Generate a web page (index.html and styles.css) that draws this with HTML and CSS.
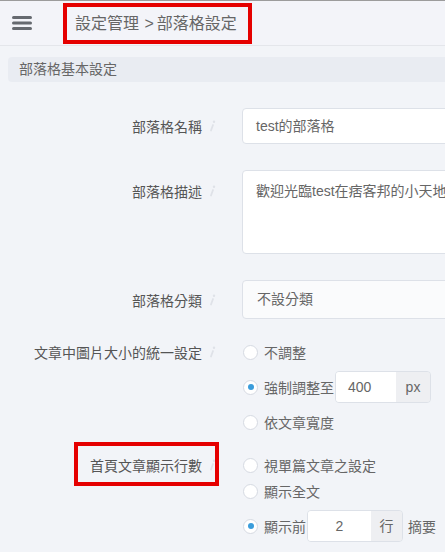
FILE: index.html
```html
<!DOCTYPE html>
<html lang="zh-Hant">
<head>
  <meta charset="UTF-8" />
  <meta name="viewport" content="width=device-width, initial-scale=1.0" />
  <title>部落格設定</title>
  <link rel="stylesheet" href="styles.css">
</head>
<body>

  <header class="topbar">
    <svg class="menu-icon" width="20" height="16" viewBox="0 0 20 16">
      <rect x="0" y="1" width="20" height="3" rx="1.5" fill="#666a70" />
      <rect x="0" y="6.5" width="20" height="3" rx="1.5" fill="#666a70" />
      <rect x="0" y="12" width="20" height="3" rx="1.5" fill="#666a70" />
    </svg>
    <div class="crumbs">設定管理 <span class="crumb-sep">&gt;</span>部落格設定</div>
  </header>

  <div class="section-title">部落格基本設定</div>

  <div class="form">

    <!-- 部落格名稱 -->
    <div class="row row-input">
      <div class="label">部落格名稱 <svg class="info" width="8" height="12" viewBox="0 0 8 12"><circle cx="6" cy="1.8" r="1.2" fill="#dfe2e8"/><path d="M5 5 L3 10.5" stroke="#dfe2e8" stroke-width="1.8" stroke-linecap="round"/></svg></div>
      <div class="field"><div class="text-input">test的部落格</div></div>
    </div>

    <!-- 部落格描述 -->
    <div class="row row-tall">
      <div class="label">部落格描述 <svg class="info" width="8" height="12" viewBox="0 0 8 12"><circle cx="6" cy="1.8" r="1.2" fill="#dfe2e8"/><path d="M5 5 L3 10.5" stroke="#dfe2e8" stroke-width="1.8" stroke-linecap="round"/></svg></div>
      <div class="field"><div class="textarea">歡迎光臨test在痞客邦的小天地</div></div>
    </div>

    <!-- 部落格分類 -->
    <div class="row row-select">
      <div class="label">部落格分類 <svg class="info" width="8" height="12" viewBox="0 0 8 12"><circle cx="6" cy="1.8" r="1.2" fill="#dfe2e8"/><path d="M5 5 L3 10.5" stroke="#dfe2e8" stroke-width="1.8" stroke-linecap="round"/></svg></div>
      <div class="field"><div class="select">不設分類</div></div>
    </div>

    <!-- 圖片大小 -->
    <div class="row row-radio row-img">
      <div class="label">文章中圖片大小的統一設定 <svg class="info" width="8" height="12" viewBox="0 0 8 12"><circle cx="6" cy="1.8" r="1.2" fill="#dfe2e8"/><path d="M5 5 L3 10.5" stroke="#dfe2e8" stroke-width="1.8" stroke-linecap="round"/></svg></div>
      <div class="field">
        <div class="opt"><span class="radio"></span>不調整</div>
        <div class="opt opt-group"><span class="radio checked"></span>強制調整至<span class="input-group"><span class="ig-value">400</span><span class="ig-addon">px</span></span></div>
        <div class="opt"><span class="radio"></span>依文章寬度</div>
      </div>
    </div>

    <!-- 首頁文章顯示行數 -->
    <div class="row row-radio">
      <div class="label">首頁文章顯示行數 <svg class="info" width="8" height="12" viewBox="0 0 8 12"><circle cx="6" cy="1.8" r="1.2" fill="#dfe2e8"/><path d="M5 5 L3 10.5" stroke="#dfe2e8" stroke-width="1.8" stroke-linecap="round"/></svg><span class="mark"></span></div>
      <div class="field">
        <div class="opt"><span class="radio"></span>視單篇文章之設定</div>
        <div class="opt"><span class="radio"></span>顯示全文</div>
        <div class="opt opt-group"><span class="radio checked"></span>顯示前<span class="input-group ig-lines"><span class="ig-value">2</span><span class="ig-addon">行</span></span><span class="after">摘要</span></div>
      </div>
    </div>

  </div>

</body>
</html>
```

FILE: styles.css
```css
body {
  margin: 0;
  background: #f2f4f8;
  color: #666;
  font-family: "Liberation Sans", "Noto Sans CJK TC", sans-serif;
  font-size: 14px;
  overflow: hidden;
}
.topbar {
  display: flex;
  align-items: flex-start;
  height: 44px;
  border-top: 1px solid #9c9c9c;
  border-bottom: 1px solid #e4e6eb;
  background: #f3f4f9;
}
.menu-icon {
  margin: 14px 0 0 12px;
}
.crumbs {
  margin: 2px 0 0 31px;
  height: 33px;
  padding: 0 11px 0 8px;
  border: 4px solid #e50000;
  font-size: 16px;
  line-height: 33px;
  color: #666;
  white-space: nowrap;
}
.crumb-sep {
  margin: 0 3px 0 1px;
}
.section-title {
  margin: 11px 0 0 8px;
  height: 25px;
  padding-left: 11px;
  background: #e9ecf2;
  border-radius: 4px 0 0 4px;
  font-size: 14px;
  line-height: 25px;
  color: #666;
}
.form {
  padding-top: 26px;
}
.row {
  display: grid;
  grid-template-columns: 242px 320px;
  align-items: start;
}
.label {
  position: relative;
  display: flex;
  justify-content: flex-end;
  align-items: center;
  gap: 6px;
  padding-right: 26px;
  height: 36px;
  color: #555;
  white-space: nowrap;
}
.info {
  flex: none;
}
.row-input {
  margin-bottom: 26px;
}
.row-tall {
  margin-bottom: 26px;
}
.row-tall .label {
  height: 42px;
}
.row-select {
  margin-bottom: 20px;
}
.row-select .label {
  height: 39px;
}
.row-radio .label {
  height: 26px;
}
.row-img {
  margin-bottom: 17px;
}
.text-input, .select, .textarea {
  box-sizing: border-box;
  background: #fff;
  border: 1px solid #dde1e8;
  border-radius: 4px;
  padding: 0 13px;
  white-space: nowrap;
  overflow: hidden;
}
.text-input {
  height: 36px;
  line-height: 34px;
}
.textarea {
  height: 84px;
  padding-top: 9px;
  line-height: 22px;
}
.select {
  height: 39px;
  line-height: 37px;
  padding-left: 14px;
  background: #fafbfc;
}
.opt {
  display: flex;
  align-items: center;
  height: 26px;
  white-space: nowrap;
}
.opt-group {
  height: 32px;
  margin: 6px 0;
}
.radio {
  box-sizing: border-box;
  width: 15px;
  height: 15px;
  margin: 0 6px 0 1px;
  border: 1px solid #d6dae2;
  border-radius: 50%;
  background: #fff;
  display: flex;
  align-items: center;
  justify-content: center;
}
.radio.checked::after {
  content: "";
  width: 6px;
  height: 6px;
  border-radius: 50%;
  background: #3b9ddb;
}
.input-group {
  display: flex;
  box-sizing: border-box;
  height: 32px;
  margin-left: 1px;
  border: 1px solid #dde1e8;
  border-radius: 4px;
  overflow: hidden;
}
.ig-value {
  width: 60px;
  padding-left: 12px;
  background: #fff;
  line-height: 30px;
  box-sizing: border-box;
}
.ig-addon {
  width: 34px;
  background: #eeeff2;
  line-height: 30px;
  text-align: center;
}
.ig-lines .ig-value {
  width: 63px;
  padding-left: 0;
  text-align: center;
}
.ig-lines .ig-addon {
  width: 31px;
}
.after {
  margin-left: 5px;
}
.mark {
  position: absolute;
  left: 74px;
  top: -10px;
  width: 145px;
  height: 44px;
  box-sizing: border-box;
  border: 4px solid #e50000;
}
```
